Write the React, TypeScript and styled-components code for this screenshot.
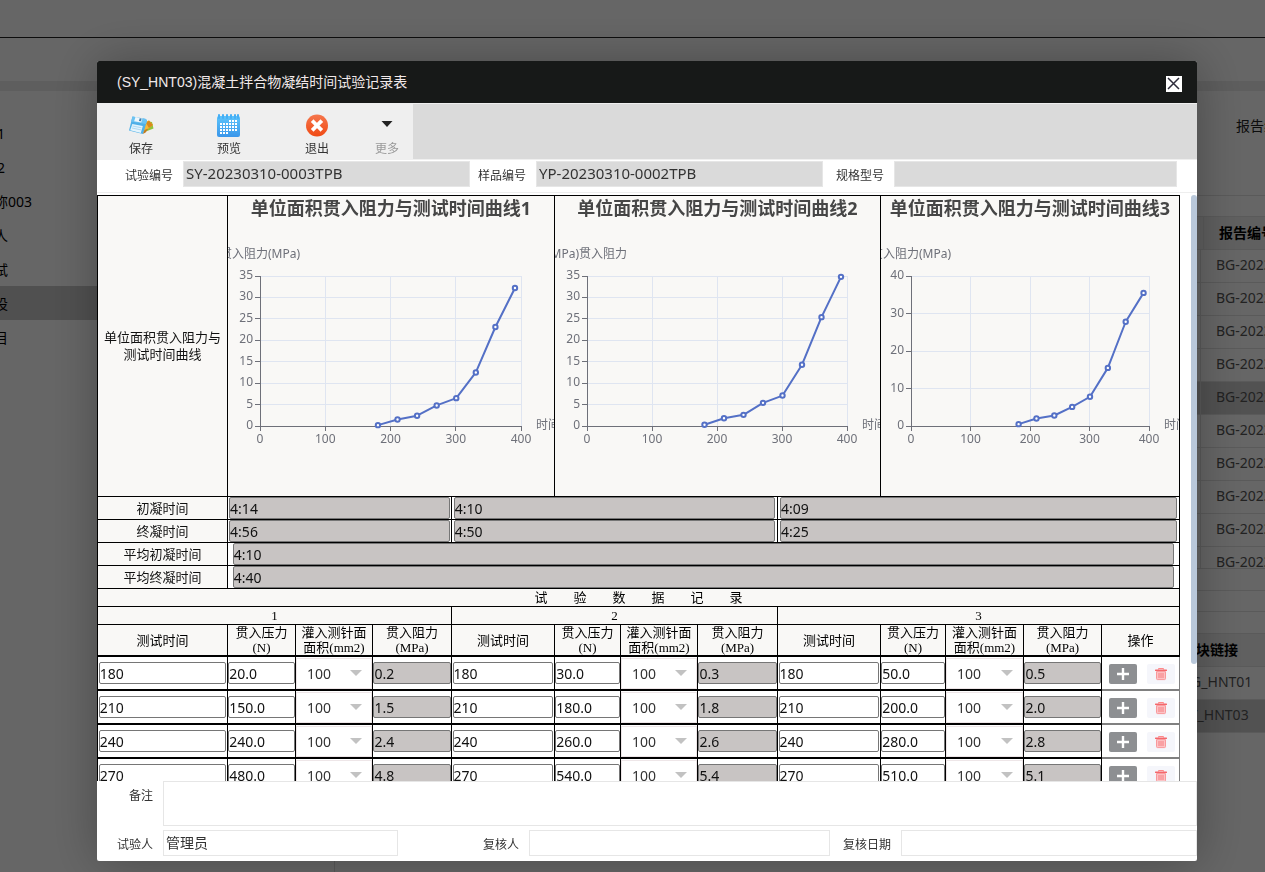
import React from "react";
import styled, { createGlobalStyle } from "styled-components";

const UI = `"Noto Sans", "Noto Sans CJK SC", sans-serif`;
const SONG = `"Liberation Serif", "Noto Sans CJK SC", sans-serif`;

const GlobalStyle = createGlobalStyle`
  * { box-sizing: border-box; }
  body { margin: 0; background: #fff; font: 14px/20px ${UI}; color: #333; overflow: hidden; }
  input, select, button, textarea { font-family: inherit; outline: none; }
`;

/* ---------- page behind the dialog ---------- */

const Page = styled.div`
  min-height: 100vh;
  display: flex;
  flex-direction: column;
`;
const TopBar = styled.header`
  height: 38px;
  border-bottom: 1px solid #222;
`;
const NavBar = styled.div`
  height: 43px;
`;
const Strip = styled.div`
  height: 10px;
  background: #eaeaea;
`;
const PageBody = styled.div`
  flex: 1;
  display: flex;
`;
const Sidebar = styled.ul`
  flex: 0 0 335px;
  margin: 0;
  padding: 25px 0 0;
  list-style: none;
  border-right: 1px solid #ddd;
  overflow: hidden;
`;
const SideItem = styled.li<{ $active?: boolean; $narrow?: boolean }>`
  height: 34px;
  line-height: 36px;
  text-indent: ${(p) => (p.$narrow ? -3 : -6)}px;
  color: #000;
  background: ${(p) => (p.$active ? "#c8c8c8" : "transparent")};
`;
const Main = styled.main`
  flex: 1;
  min-width: 0;
  overflow: hidden;
`;
const Filter = styled.div`
  height: 105px;
  padding: 25px 0 0 901px;
  white-space: nowrap;
  color: #222;
  border-bottom: 1px solid #e2e2e2;
`;
const Band = styled.div<{ $h: number }>`
  height: ${(p) => p.$h}px;
  border-bottom: 1px solid #e2e2e2;
`;
const Clip = styled.div<{ $h: number }>`
  height: ${(p) => p.$h}px;
  overflow: hidden;
  border-bottom: 1px solid #ddd;
`;
const ListTable = styled.table<{ $first: number }>`
  width: 100%;
  table-layout: fixed;
  border-collapse: separate;
  border-spacing: 0;
  th, td {
    height: 33px;
    padding: 0 0 2px 15px;
    text-align: left;
    white-space: nowrap;
    border-bottom: 1px solid #e2e2e2;
  }
  th:first-child, td:first-child {
    width: ${(p) => p.$first}px;
    border-right: 1px solid #e2e2e2;
  }
  th { background: #efefef; color: #000; font-weight: 700; padding-bottom: 0; }
`;
const ListRow = styled.tr<{ $active?: boolean }>`
  color: #555;
  background: ${(p) => (p.$active ? "#cdcdcd" : "transparent")};
`;

/* ---------- dialog ---------- */

const Overlay = styled.div`
  position: fixed;
  inset: 0;
  display: flex;
  padding: 61px 68px 11px 97px;
  background: rgba(0, 0, 0, 0.6);
`;
const Dialog = styled.section`
  flex: 1;
  min-width: 0;
  display: flex;
  flex-direction: column;
  background: #fff;
  border-radius: 2px;
  overflow: hidden;
  box-shadow: 1px 1px 50px rgba(0, 0, 0, 0.3);
`;
const TitleBar = styled.header`
  display: flex;
  align-items: center;
  justify-content: space-between;
  height: 42px;
  padding: 0 15px 0 20px;
  background: #171918;
`;
const Title = styled.h1`
  margin: 0;
  font: 400 14px/20px "Liberation Sans", "Noto Sans CJK SC", sans-serif;
  color: #f1e9e9;
`;
const CloseButton = styled.button`
  width: 16px;
  height: 16px;
  padding: 0;
  margin-top: 3px;
  border: 0;
  background: #fff;
  display: grid;
  place-items: center;
`;
const Toolbar = styled.div`
  display: flex;
  height: 57px;
  background: #efefef;
`;
const ToolButton = styled.button<{ $w: number; $muted?: boolean }>`
  width: ${(p) => p.$w}px;
  border: 0;
  padding: 10px 0 0;
  background: transparent;
  display: flex;
  flex-direction: column;
  align-items: center;
  gap: 2px;
  font-size: 12px;
  line-height: 20px;
  color: ${(p) => (p.$muted ? "#999" : "#333")};
`;
const ToolFill = styled.div`
  flex: 1;
  margin: 1px 0;
  background: #dadada;
`;
const InfoRow = styled.div`
  display: grid;
  grid-template-columns: 86px 287fr 66px 287fr 71px 283fr;
  height: 33px;
  padding: 1px 20px 0 0;
  border-bottom: 1px solid #eee;
`;
const SignRow = styled.div`
  display: grid;
  grid-template-columns: 66px 235fr 131px 301fr 71px 296fr;
  padding: 4px 0 5px;
`;
const FieldLabel = styled.label`
  padding: 5px 10px 0 0;
  text-align: right;
  font-size: 12px;
  line-height: 20px;
  white-space: nowrap;
  color: #333;
`;
const Field = styled.input<{ $size?: number }>`
  width: 100%;
  min-width: 0;
  height: 26px;
  padding: 0 2px 2px;
  border: 1px solid #e6e6e6;
  background: #fff;
  font-size: ${(p) => p.$size ?? 14}px;
  color: #333;
  &:read-only { background: #dadada; }
`;
const RemarkRow = styled.div`
  display: grid;
  grid-template-columns: 66px 1fr;
  height: 45px;
`;
const Remark = styled.textarea`
  height: 45px;
  border: 1px solid #e6e6e6;
  resize: none;
`;
const ScrollArea = styled.div`
  flex: 1;
  min-height: 0;
  display: flex;
  gap: 11px;
  margin-top: 2px;
  overflow: hidden;
`;
const Track = styled.div`
  flex: 0 0 6px;
`;
const Thumb = styled.div`
  height: 80%;
  border-radius: 3px;
  background: #b9c8da;
`;

/* ---------- record table ---------- */

const Sheet = styled.table`
  flex: 1;
  min-width: 0;
  align-self: flex-start;
  table-layout: fixed;
  border-collapse: separate;
  border-spacing: 0;
  border: solid #000;
  border-width: 1px 0 0 1px;
`;
const Cell = styled.td<{ $h?: number }>`
  height: ${(p) => p.$h ?? 23}px;
  padding: 0;
  border: solid #000;
  border-width: 0 1px 1px 0;
  text-align: center;
  vertical-align: middle;
  color: #111;
`;
const RowLabel = styled(Cell).attrs({ as: "th", scope: "row" })`
  font-weight: 400;
  font-size: 13px;
  line-height: 17px;
  background: #f9f8f6;
`;
const ChartCell = styled(Cell)`
  background: #f9f8f6;
  vertical-align: top;
`;
const HeadCell = styled(Cell).attrs({ as: "th" })<{ $thick?: boolean }>`
  font: 400 13px/15px ${SONG};
  color: #000;
  background: #f9f8f6;
  border-bottom-width: ${(p) => (p.$thick ? 2 : 1)}px;
`;
const DataCell = styled(Cell)`
  height: 34px;
  border-bottom-width: 2px;
`;
const ActionCell = styled(DataCell)`
  border-color: #808080;
`;
const CellInput = styled.input`
  display: block;
  width: 99%;
  height: 22px;
  margin: 0 auto;
  padding: 0;
  border: 1px solid #767676;
  border-radius: 2px;
  background: #fff;
  font-size: 14px;
  color: #111;
  &:read-only { background: #c8c4c3; }
`;
const SelectBox = styled.div`
  position: relative;
  height: 31px;
  &::after {
    content: "";
    position: absolute;
    right: 10px;
    top: 12px;
    border: 6px solid transparent;
    border-top-color: #c2c2c2;
    border-bottom: 0;
    pointer-events: none;
  }
`;
const CellSelect = styled.select`
  appearance: none;
  display: block;
  width: 100%;
  height: 31px;
  padding: 0 10px;
  border: 1px solid #eee6e8;
  border-radius: 0;
  background: #fff;
  font-size: 14px;
  color: #333;
`;
const Actions = styled.div`
  display: flex;
  gap: 10px;
  padding: 2px 0 0 7px;
`;
const SmallButton = styled.button<{ $bg: string }>`
  width: 28px;
  height: 20px;
  padding: 0;
  border: 0;
  border-radius: 2px;
  background: ${(p) => p.$bg};
  display: grid;
  place-items: center;
`;
const ChartSvg = styled.svg`
  display: block;
  width: 100%;
  height: 300px;
  font-family: ${UI};
`;

/* ---------- icons ---------- */

const SaveIcon = () => (
  <svg width="26" height="24" viewBox="0 0 26 24">
    <path d="M17 8l7 1 1.500 6.500L14 20z" fill="#8fc53c" />
    <path d="M17 9l4-1.500 4 4.500-10 8-2-1z" fill="#f5b93a" />
    <path d="M21 7.500l4 4.500-4 3-3-5z" fill="#d88a1e" />
    <path d="M4.500 3.500L18 6l1 2-4 13L1 17.500z" fill="#4fb0e8" />
    <path d="M4.500 3.500L18 6l1 2-1 3L3 8.500z" fill="#6cc3f2" />
    <path d="M7.500 4l7 1.300-1.300 4.200-7-1.300z" fill="#eef7fc" />
    <path d="M11.700 5.200l2 .4-.8 2.700-2-.4z" fill="#3f7fae" />
    <path d="M4.300 11l10.500 2-2 7L2.200 17.200z" fill="#e4f4fc" />
    <path d="M4.500 13l9 1.800M4 15l9 1.900" stroke="#9fd2ef" strokeWidth=".8" />
    <path d="M15 21l1.500-4 4-1.500-3 4z" fill="#c27a22" />
  </svg>
);

const CalendarIcon = () => (
  <svg width="24" height="24" viewBox="0 0 24 24">
    <defs>
      <linearGradient id="cal" x1="0" y1="0" x2="0" y2="1">
        <stop offset="0" stopColor="#5cc4fb" />
        <stop offset="1" stopColor="#3a96ea" />
      </linearGradient>
    </defs>
    <rect x="0" y="3" width="23" height="21" rx="2" fill="url(#cal)" />
    {[1, 5, 9, 13, 17, 20].map((x) => (
      <rect key={x} x={x} y="1" width="2" height="5" rx="1" fill="#45aef5" />
    ))}
    {[7, 10, 13, 16, 19].map((y, r) =>
      [3, 6, 9, 12, 15, 18].map((x, c) =>
        (r === 0 && c < 3) || (r === 4 && c > 2) ? null : (
          <rect key={`${x}-${y}`} x={x} y={y} width="2" height="2" fill="#fff" />
        )
      )
    )}
  </svg>
);

const ExitIcon = () => (
  <svg width="24" height="24" viewBox="0 0 24 24">
    <defs>
      <linearGradient id="exit" x1="0" y1="0" x2="0" y2="1">
        <stop offset="0" stopColor="#f5764c" />
        <stop offset="1" stopColor="#f04a14" />
      </linearGradient>
    </defs>
    <circle cx="12" cy="12.500" r="11" fill="url(#exit)" />
    <path d="M8.500 9l7 7M15.500 9l-7 7" stroke="#fff" strokeWidth="3.800" strokeLinecap="square" />
  </svg>
);

const MoreIcon = () => (
  <svg width="24" height="24" viewBox="0 0 24 24">
    <path d="M6.500 8h11L12 14z" fill="#222" />
  </svg>
);

const PlusIcon = () => (
  <svg width="12" height="12" viewBox="0 0 12 12">
    <path d="M6 0v12M0 6h12" stroke="#fff" strokeWidth="2.400" />
  </svg>
);

const TrashIcon = () => (
  <svg width="14" height="14" viewBox="0 0 14 14">
    <path d="M4.500 2.500V1.500h5v1" fill="none" stroke="#f88" strokeWidth="1" />
    <rect x="1" y="2.500" width="12" height="1.600" rx=".5" fill="#f4686c" />
    <path d="M2.500 4.600h9v7a1 1 0 0 1-1 1h-7a1 1 0 0 1-1-1z" fill="#fcc3c5" stroke="#f9989b" strokeWidth="1" />
    <path d="M5 6v5M7 6v5M9 6v5" stroke="#f67e82" strokeWidth="1" />
  </svg>
);

/* ---------- chart ---------- */

type ChartProps = {
  width: number;
  left: number;
  title: string;
  yName: string;
  max: number;
  step: number;
  values: number[];
};

const TOP = 80;
const BOTTOM = 230;

function Chart({ width, left, title, yName, max, step, values }: ChartProps) {
  const right = Math.floor(width * 0.9);
  const px = (v: number) => left + ((right - left) * v) / 400;
  const py = (v: number) => BOTTOM - ((BOTTOM - TOP) * v) / max;
  const snap = (v: number) => Math.floor(v) + 0.5;
  const yTicks = Array.from({ length: max / step + 1 }, (_, i) => i * step);
  const xTicks = [0, 100, 200, 300, 400];
  const points = values.map((v, i) => [px(180 + i * 30) + 0.5, py(v)]);
  return (
    <ChartSvg viewBox={`0 0 ${width} 300`} role="img" aria-label={title}>
      <text x={width / 2} y="19" textAnchor="middle" fontSize="18" fontWeight="700" fill="#464646">
        {title}
      </text>
      <text x={left} y="62" textAnchor="middle" fontSize="12" fill="#6e7079">
        {yName}
      </text>
      <text x={right + 15} y="233" fontSize="12" fill="#6e7079">
        时间
      </text>
      {yTicks.slice(1).map((t) => (
        <path key={t} d={`M${left} ${snap(py(t))}H${right}`} stroke="#dfe5f1" />
      ))}
      {xTicks.slice(1).map((t) => (
        <path key={t} d={`M${snap(px(t))} ${TOP}V${BOTTOM}`} stroke="#dfe5f1" />
      ))}
      {yTicks.map((t) => (
        <g key={t}>
          <path d={`M${left - 5} ${snap(py(t))}h5`} stroke="#6e7079" />
          <text x={left - 7} y={Math.round(py(t)) + 3} textAnchor="end" fontSize="12" fill="#6e7079">
            {t}
          </text>
        </g>
      ))}
      {xTicks.map((t) => (
        <g key={t}>
          <path d={`M${snap(px(t))} ${BOTTOM}v5`} stroke="#6e7079" />
          <text x={px(t)} y="247" textAnchor="middle" fontSize="12" fill="#6e7079">
            {t}
          </text>
        </g>
      ))}
      <path d={`M${left + 0.5} ${TOP}V${BOTTOM + 0.5}H${right + 1}`} fill="none" stroke="#6e7079" />
      <polyline
        points={points.map((p) => p.join(",")).join(" ")}
        fill="none"
        stroke="#5470c6"
        strokeWidth="2"
        strokeLinejoin="bevel"
      />
      {points.map(([x, y]) => (
        <circle key={x} cx={x} cy={y} r="2.200" fill="#fff" stroke="#5470c6" strokeWidth="2" />
      ))}
    </ChartSvg>
  );
}

/* ---------- data ---------- */

const COLS = [130, 68, 77, 79, 103, 66, 77, 80, 103, 65, 78, 78, 78];

const CHARTS: ChartProps[] = [
  { width: 326, left: 32, title: "单位面积贯入阻力与测试时间曲线1", yName: "贯入阻力(MPa)", max: 35, step: 5, values: [0.2, 1.5, 2.4, 4.8, 6.5, 12.5, 23.1, 32.2] },
  { width: 325, left: 32, title: "单位面积贯入阻力与测试时间曲线2", yName: "(MPa)贯入阻力", max: 35, step: 5, values: [0.3, 1.8, 2.6, 5.4, 7.1, 14.3, 25.4, 34.8] },
  { width: 298, left: 30, title: "单位面积贯入阻力与测试时间曲线3", yName: "贯入阻力(MPa)", max: 40, step: 10, values: [0.5, 2.0, 2.8, 5.1, 7.8, 15.5, 27.8, 35.5] },
];

const TIMES = [
  { label: "初凝时间", values: ["4:14", "4:10", "4:09"] },
  { label: "终凝时间", values: ["4:56", "4:50", "4:25"] },
];
const AVERAGES = [
  { label: "平均初凝时间", value: "4:10" },
  { label: "平均终凝时间", value: "4:40" },
];
const SPANS = [3, 4, 5];

const ROWS = [
  { t: "180", g: [["20.0", "0.2"], ["30.0", "0.3"], ["50.0", "0.5"]] },
  { t: "210", g: [["150.0", "1.5"], ["180.0", "1.8"], ["200.0", "2.0"]] },
  { t: "240", g: [["240.0", "2.4"], ["260.0", "2.6"], ["280.0", "2.8"]] },
  { t: "270", g: [["480.0", "4.8"], ["540.0", "5.4"], ["510.0", "5.1"]] },
];

const SIDE = ["1", "2", "称003", "人", "试", "设", "目"];

function RecordTable() {
  return (
    <Sheet>
      <colgroup>
        {COLS.map((w, i) => (
          <col key={i} width={w} />
        ))}
      </colgroup>
      <tbody>
        <tr>
          <RowLabel $h={301}>
            单位面积贯入阻力与
            <br />
            测试时间曲线
          </RowLabel>
          {CHARTS.map((c) => (
            <ChartCell key={c.title} colSpan={4}>
              <Chart {...c} />
            </ChartCell>
          ))}
        </tr>
        {TIMES.map((r) => (
          <tr key={r.label}>
            <RowLabel>{r.label}</RowLabel>
            {r.values.map((v, i) => (
              <Cell key={i} colSpan={SPANS[i]}>
                <CellInput readOnly defaultValue={v} aria-label={`${r.label}${i + 1}`} />
              </Cell>
            ))}
          </tr>
        ))}
        {AVERAGES.map((r) => (
          <tr key={r.label}>
            <RowLabel>{r.label}</RowLabel>
            <Cell colSpan={12}>
              <CellInput readOnly defaultValue={r.value} aria-label={r.label} />
            </Cell>
          </tr>
        ))}
        <tr>
          <HeadCell $h={18} colSpan={13}>
            试　　验　　数　　据　　记　　录
          </HeadCell>
        </tr>
        <tr>
          {SPANS.map((_, i) => (
            <HeadCell key={i} $h={18} colSpan={[4, 4, 5][i]}>
              {i + 1}
            </HeadCell>
          ))}
        </tr>
        <tr>
          {SPANS.map((_, i) => (
            <React.Fragment key={i}>
              <HeadCell $h={32} $thick>测试时间</HeadCell>
              <HeadCell $h={32} $thick>贯入压力<br />(N)</HeadCell>
              <HeadCell $h={32} $thick>灌入测针面<br />面积(mm2)</HeadCell>
              <HeadCell $h={32} $thick>贯入阻力<br />(MPa)</HeadCell>
            </React.Fragment>
          ))}
          <HeadCell $h={32} $thick>操作</HeadCell>
        </tr>
        {ROWS.map((r) => (
          <tr key={r.t}>
            {r.g.map(([force, res], i) => (
              <React.Fragment key={i}>
                <DataCell>
                  <CellInput defaultValue={r.t} aria-label="测试时间" />
                </DataCell>
                <DataCell>
                  <CellInput defaultValue={force} aria-label="贯入压力" />
                </DataCell>
                <DataCell>
                  <SelectBox>
                    <CellSelect defaultValue="100" aria-label="灌入测针面面积">
                      <option>100</option>
                    </CellSelect>
                  </SelectBox>
                </DataCell>
                <DataCell>
                  <CellInput readOnly defaultValue={res} aria-label="贯入阻力" />
                </DataCell>
              </React.Fragment>
            ))}
            <ActionCell>
              <Actions>
                <SmallButton $bg="#8d8f92" aria-label="添加">
                  <PlusIcon />
                </SmallButton>
                <SmallButton $bg="#f5f6fb" aria-label="删除">
                  <TrashIcon />
                </SmallButton>
              </Actions>
            </ActionCell>
          </tr>
        ))}
      </tbody>
    </Sheet>
  );
}

function Backdrop() {
  return (
    <Page>
      <TopBar />
      <NavBar />
      <Strip />
      <PageBody>
        <Sidebar>
          {SIDE.map((s, i) => (
            <SideItem key={s} $active={i === 5} $narrow={i < 2}>
              {s}
            </SideItem>
          ))}
        </Sidebar>
        <Main>
          <Filter>报告编号</Filter>
          <Band $h={21} />
          <ListTable $first={869}>
            <thead>
              <tr>
                <th />
                <th>报告编号</th>
              </tr>
            </thead>
          </ListTable>
          <Clip $h={319}>
            <ListTable $first={866}>
              <tbody>
                {Array.from({ length: 10 }, (_, i) => (
                  <ListRow key={i} $active={i === 4}>
                    <td />
                    <td>BG-2023</td>
                  </ListRow>
                ))}
              </tbody>
            </ListTable>
          </Clip>
          <Band $h={22} />
          <Band $h={21} />
          <Band $h={22} />
          <ListTable $first={832}>
            <thead>
              <tr>
                <th />
                <th>模块链接</th>
              </tr>
            </thead>
            <tbody>
              <ListRow>
                <td />
                <td>BG_HNT01</td>
              </ListRow>
              <ListRow $active>
                <td />
                <td>SY_HNT03</td>
              </ListRow>
            </tbody>
          </ListTable>
        </Main>
      </PageBody>
    </Page>
  );
}

export default function App() {
  return (
    <>
      <GlobalStyle />
      <Backdrop />
      <Overlay>
        <Dialog role="dialog" aria-labelledby="dialog-title">
          <TitleBar>
            <Title id="dialog-title">(SY_HNT03)混凝土拌合物凝结时间试验记录表</Title>
            <CloseButton aria-label="关闭">
              <svg width="14" height="14" viewBox="0 0 14 14">
                <path d="M1 1l11 11M12 1l-11 11" stroke="#2e2d3c" strokeWidth="1.500" />
              </svg>
            </CloseButton>
          </TitleBar>
          <Toolbar>
            <ToolButton $w={88}>
              <SaveIcon />
              保存
            </ToolButton>
            <ToolButton $w={88}>
              <CalendarIcon />
              预览
            </ToolButton>
            <ToolButton $w={88}>
              <ExitIcon />
              退出
            </ToolButton>
            <ToolButton $w={52} $muted>
              <MoreIcon />
              更多
            </ToolButton>
            <ToolFill />
          </Toolbar>
          <InfoRow>
            <FieldLabel htmlFor="test-no">试验编号</FieldLabel>
            <Field id="test-no" readOnly $size={15} defaultValue="SY-20230310-0003TPB" />
            <FieldLabel htmlFor="sample-no">样品编号</FieldLabel>
            <Field id="sample-no" readOnly $size={15} defaultValue="YP-20230310-0002TPB" />
            <FieldLabel htmlFor="spec">规格型号</FieldLabel>
            <Field id="spec" readOnly $size={15} defaultValue="" />
          </InfoRow>
          <ScrollArea>
            <RecordTable />
            <Track>
              <Thumb />
            </Track>
          </ScrollArea>
          <RemarkRow>
            <FieldLabel htmlFor="remark">备注</FieldLabel>
            <Remark id="remark" />
          </RemarkRow>
          <SignRow>
            <FieldLabel htmlFor="tester">试验人</FieldLabel>
            <Field id="tester" defaultValue="管理员" />
            <FieldLabel htmlFor="reviewer">复核人</FieldLabel>
            <Field id="reviewer" />
            <FieldLabel htmlFor="review-date">复核日期</FieldLabel>
            <Field id="review-date" />
          </SignRow>
        </Dialog>
      </Overlay>
    </>
  );
}
